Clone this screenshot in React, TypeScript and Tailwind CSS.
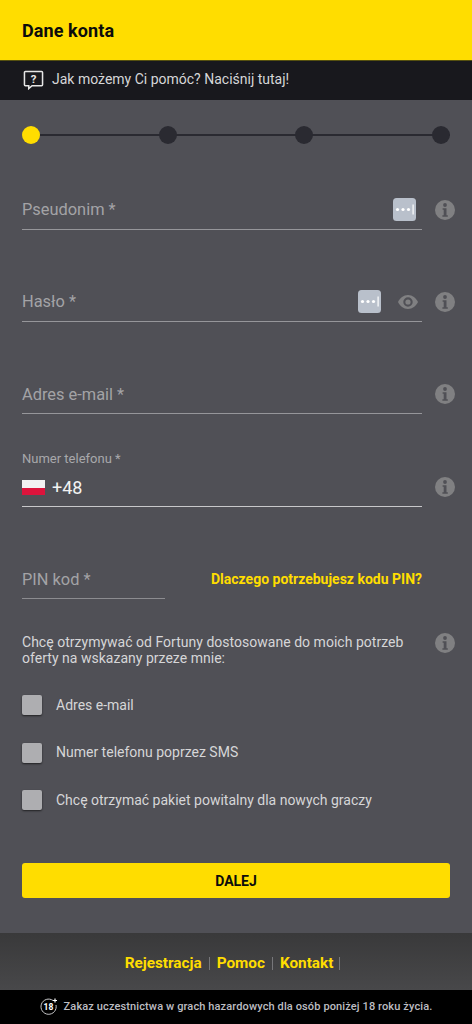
import React from "react";

function Info({ className = "" }: { className?: string }) {
  return (
    <svg viewBox="0 0 20 20" className={"w-5 h-5 shrink-0 " + className}>
      <circle cx="10" cy="10" r="10" fill="#808082" />
      <circle cx="10" cy="5" r="1.9" fill="#505056" />
      <path d="M7.6 8.2h3.9v7h1.3v1.5H7.4v-1.5h1.3V9.7H7.6z" fill="#505056" />
    </svg>
  );
}

function Keys() {
  return (
    <svg viewBox="0 0 23 23" className="w-[23px] h-[23px] shrink-0">
      <rect width="23" height="23" rx="3.5" fill="#b9c0cb" />
      <circle cx="4.5" cy="11.5" r="1.6" fill="#fff" />
      <circle cx="10" cy="11.5" r="1.6" fill="#fff" />
      <circle cx="15.5" cy="11.5" r="1.6" fill="#fff" />
      <rect x="19.5" y="6.5" width="1.2" height="10" fill="#fff" />
    </svg>
  );
}

function Eye() {
  return (
    <svg viewBox="0 0 20 14" className="w-5 h-[14px] shrink-0">
      <path
        fillRule="evenodd"
        d="M10 0C5.5 0 2 3 0 7c2 4 5.500 7 10 7s8-3 10-7c-2-4-5.500-7-10-7zm0 2.300a4.700 4.700 0 1 1 0 9.400 4.700 4.700 0 0 1 0-9.400z"
        fill="#808082"
      />
      <circle cx="10" cy="7" r="2.600" fill="#808082" />
    </svg>
  );
}

function Field({ label, extra, lower }: { label: string; extra?: React.ReactNode; lower?: boolean }) {
  return (
    <div className="flex items-start h-[40px] w-[433px] shrink-0">
      <div className="w-[400px] h-[40px] shrink-0 border-b border-[#96969a] flex items-center justify-between">
        <span className={"text-[16.4px] text-[#a3a3a6] " + (lower ? "pt-[4px]" : "pt-[2px]")}>{label}</span>
        {extra}
      </div>
      <Info className="ml-[13px] mt-[10px]" />
    </div>
  );
}

function Check({ label }: { label: string }) {
  return (
    <div className="flex items-center h-5">
      <div className="w-5 h-5 rounded-[2px] bg-[#aeaeb1] shadow-[0_1px_2px_rgba(0,0,0,0.6)]" />
      <span className="ml-[14px] text-[14px] text-[#d6d6d8]">{label}</span>
    </div>
  );
}

export default function App() {
  return (
    <div className="w-[472px] h-[1024px] flex flex-col bg-[#505056] font-['Roboto',sans-serif] overflow-hidden">
      <header className="h-[60px] shrink-0 bg-[#ffdd00] flex items-center px-[22px]">
        <h1 className="text-[18px] font-bold tracking-[0.1px] text-[#0c0c0c]">Dane konta</h1>
      </header>
      <div className="h-[40px] shrink-0 bg-[#18181d] border-t border-[#55500f] border-b-[#3a3a3f] flex items-center px-[23px] pb-[2px]">
        <svg viewBox="0 0 21 21" className="w-[21px] h-[20px] shrink-0">
          <path d="M2 1.500h17a1 1 0 0 1 1 1v13a1 1 0 0 1-1 1H9l-3.500 3v-3H2a1 1 0 0 1-1-1v-13a1 1 0 0 1 1-1z" fill="none" stroke="#e6e6e6" strokeWidth="1.600" />
          <text x="10.500" y="13.500" textAnchor="middle" fontSize="12" fontWeight="700" fill="#e6e6e6" fontFamily="Roboto, sans-serif">?</text>
        </svg>
        <span className="ml-[8px] text-[14px] text-[#d6d6d8]">Jak możemy Ci pomóc? Naciśnij tutaj!</span>
      </div>

      <main className="flex-1 flex flex-col px-[22px]">
        <div className="relative mt-[26px] h-[18px] w-[428px] flex items-center justify-between">
          <div className="absolute left-0 right-0 top-[8px] h-[2px] bg-[#2a2a31]" />
          <div className="relative w-[18px] h-[18px] rounded-full bg-[#ffdd00]" />
          <div className="relative w-[18px] h-[18px] rounded-full bg-[#2a2a31]" />
          <div className="relative w-[18px] h-[18px] rounded-full bg-[#2a2a31]" />
          <div className="relative w-[18px] h-[18px] rounded-full bg-[#2a2a31]" />
        </div>

        <div className="mt-[46px]">
          <Field label="Pseudonim *" extra={<span className="mr-[6px] flex"><Keys /></span>} />
        </div>
        <div className="mt-[52px]">
          <Field
            label="Hasło *"
            extra={
              <span className="flex items-center gap-[17px] mr-[4px]">
                <Keys />
                <Eye />
              </span>
            }
          />
        </div>
        <div className="mt-[52px]">
          <Field label="Adres e-mail *" lower />
        </div>

        <div className="mt-[38px] flex items-start w-[433px]">
          <div className="w-[400px] h-[55px] shrink-0 border-b border-[#c8c8ca] flex flex-col">
            <span className="text-[13px] leading-[14px] text-[#a8a8ab]">Numer telefonu *</span>
            <div className="flex items-center mt-[11px]">
              <div className="w-[23px] h-[15px] flex flex-col shrink-0">
                <div className="h-1/2 bg-[#f2f2f2]" />
                <div className="h-1/2 bg-[#dc143c]" />
              </div>
              <span className="ml-[7px] text-[18px] leading-[21px] text-[#f2f2f2]">+48</span>
            </div>
          </div>
          <Info className="ml-[13px] mt-[25px]" />
        </div>

        <div className="mt-[52px] flex items-center w-[400px] justify-between">
          <div className="w-[143px] h-[40px] border-b border-[#8c8c90] flex items-center">
            <span className="text-[16.4px] pt-[4px] text-[#a3a3a6]">PIN kod *</span>
          </div>
          <a className="text-[14px] font-bold text-[#ffdd00]">Dlaczego potrzebujesz kodu PIN?</a>
        </div>

        <div className="mt-[35px] flex items-start w-[433px]">
          <p className="w-[400px] shrink-0 text-[14px] leading-[16px] tracking-[0.02px] text-[#d6d6d8]">
            Chcę otrzymywać od Fortuny dostosowane do moich potrzeb oferty na wskazany przeze mnie:
          </p>
          <Info className="ml-[13px] -mt-[1px]" />
        </div>

        <div className="mt-[29px] flex flex-col gap-[27.500px]">
          <Check label="Adres e-mail" />
          <Check label="Numer telefonu poprzez SMS" />
          <Check label="Chcę otrzymać pakiet powitalny dla nowych graczy" />
        </div>

        <button className="mt-[53px] w-[428px] h-[35px] pt-[2px] rounded-[3px] bg-[#ffdd00] text-[14px] font-bold text-[#0c0c0c] shrink-0">
          DALEJ
        </button>
      </main>

      <nav className="h-[57px] shrink-0 bg-gradient-to-b from-[#39393a] to-[#48484a] flex items-center justify-center pt-[4px] pr-[7px] text-[15.3px] font-bold text-[#ffdd00]">
        <span>Rejestracja</span>
        <span className="mx-[7px] w-px h-[13px] bg-[#77777a]" />
        <span>Pomoc</span>
        <span className="mx-[7px] w-px h-[13px] bg-[#77777a]" />
        <span>Kontakt</span>
        <span className="ml-[6px] w-px h-[13px] bg-[#77777a]" />
      </nav>

      <footer className="h-[34px] shrink-0 bg-black flex items-center justify-center">
        <svg viewBox="0 0 18 18" className="w-[18px] h-[18px] shrink-0">
          <path d="M13 2.500A7.600 7.600 0 1 0 16 7" fill="none" stroke="#c8c8ca" strokeWidth="1" />
          <path d="M15 0.500v4M13 2.500h4" stroke="#fff" strokeWidth="1.200" />
          <text x="8.500" y="12" textAnchor="middle" fontSize="8.500" fontWeight="700" fill="#fff" fontFamily="Roboto, sans-serif">18</text>
        </svg>
        <span className="ml-[6px] text-[11px] font-medium tracking-[0.12px] text-[#bdbdc2]">
          Zakaz uczestnictwa w grach hazardowych dla osób poniżej 18 roku życia.
        </span>
      </footer>
    </div>
  );
}
